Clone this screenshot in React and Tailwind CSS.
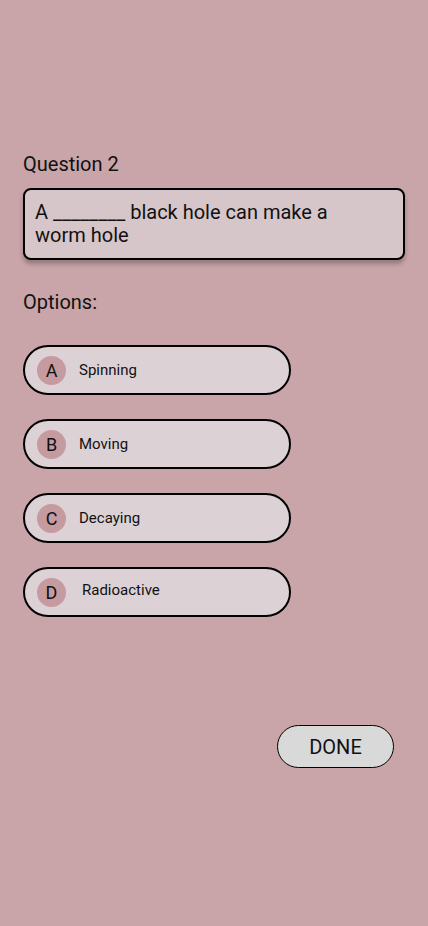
import React from 'react';

const options = [
    { letter: 'A', text: 'Spinning' },
    { letter: 'B', text: 'Moving' },
    { letter: 'C', text: 'Decaying' },
    { letter: 'D', text: 'Radioactive' },
];

const App = () => {
    return (
        <div className="min-h-[926px] w-full bg-[#c9a4a8] font-['Roboto',sans-serif] text-[#111] antialiased">
            <main className="flex flex-col px-[23px] pt-[153px]">
                {/* Question */}
                <h1 className="text-[20px] leading-[23px]">Question 2</h1>
                <div className="mt-[12px] w-[382px] rounded-[8px] border-2 border-black bg-[#d7c6c9] py-[11px] pl-[10px] text-[20px] leading-[23px] shadow-[0_4px_4px_rgba(0,0,0,0.25)]">
                    A ________ black hole can make a<br />worm hole
                </div>

                {/* Options */}
                <h2 className="mt-[31px] text-[20px] leading-[23px]">Options:</h2>
                <div className="mt-[31px] flex flex-col gap-[24px]">
                    {options.map((opt) => (
                        <div
                            key={opt.letter}
                            className="flex h-[50px] w-[268px] items-center rounded-full border-2 border-black bg-[#dcd1d4] pl-[12px]"
                        >
                            <div className="flex h-[29px] w-[29px] items-center justify-center rounded-full bg-[#c59ba0] text-[18px]">
                                {opt.letter}
                            </div>
                            <span className={opt.letter === 'D' ? 'ml-[16px] mb-[4px] text-[15px]' : 'ml-[13px] text-[15px]'}>
                                {opt.text}
                            </span>
                        </div>
                    ))}
                </div>

                {/* Done */}
                <div className="mt-[108px] flex justify-end pr-[11px]">
                    <button className="h-[43px] w-[117px] rounded-full border border-black bg-[#d9d9d9] text-[20px]">
                        DONE
                    </button>
                </div>
            </main>
        </div>
    );
};

export default App;
